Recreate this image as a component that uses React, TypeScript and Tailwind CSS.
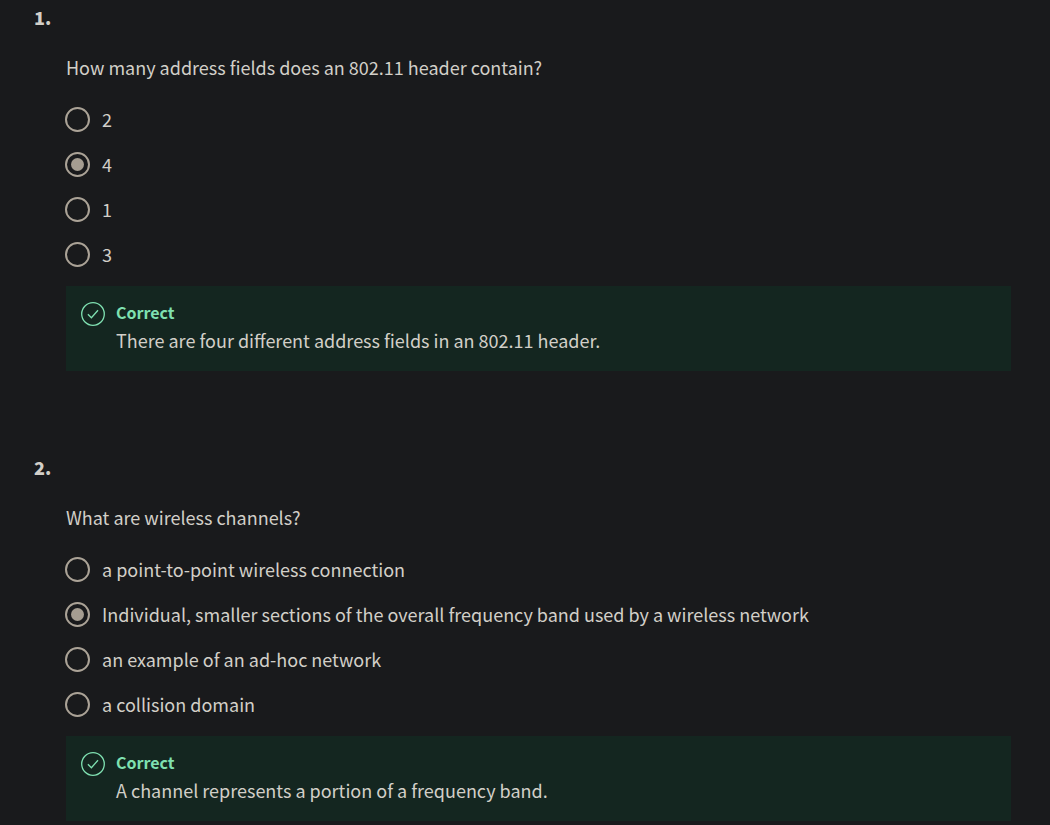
import { useState } from "react";

type Question = {
  id: number;
  prompt: string;
  options: string[];
  answer: number;
  feedback: string;
};

const questions: Question[] = [
  {
    id: 1,
    prompt: "How many address fields does an 802.11 header contain?",
    options: ["2", "4", "1", "3"],
    answer: 1,
    feedback: "There are four different address fields in an 802.11 header.",
  },
  {
    id: 2,
    prompt: "What are wireless channels?",
    options: [
      "a point-to-point wireless connection",
      "Individual, smaller sections of the overall frequency band used by a wireless network",
      "an example of an ad-hoc network",
      "a collision domain",
    ],
    answer: 1,
    feedback: "A channel represents a portion of a frequency band.",
  },
];

function CheckCircle() {
  return (
    <svg viewBox="0 0 24 24" className="mt-1 h-6 w-6 shrink-0" fill="none" stroke="#7fe0b1" aria-hidden="true">
      <circle cx="12" cy="12" r="11.3" strokeWidth="1.3" />
      <path d="M6.9 12.2l3.5 3.5L17 8.2" strokeWidth="1.3" />
    </svg>
  );
}

function QuestionBlock({ question }: { question: Question }) {
  const [selected, setSelected] = useState(question.answer);
  return (
    <section className="pb-[79px] last:pb-1">
      <h2 className="h-[35px] text-lg leading-[34px] font-black">{question.id}.</h2>
      <fieldset className="ml-8 pt-4">
        <legend className="contents">
          <span className="block h-8 leading-8">{question.prompt}</span>
        </legend>
        <div className="flex flex-col pt-[14px]">
          {question.options.map((option, i) => (
            <label key={option} className="flex h-[45px] items-center gap-3">
              <input
                type="radio"
                name={`question-${question.id}`}
                checked={selected === i}
                onChange={() => setSelected(i)}
                className="-ml-px grid size-[25px] shrink-0 appearance-none place-content-center rounded-full border-2 border-[#aba397] before:size-[13px] before:rounded-full checked:before:bg-[#a59d91]"
              />
              <span className="pb-0.5">{option}</span>
            </label>
          ))}
        </div>
      </fieldset>
      <div className="mt-[9px] ml-8 flex gap-[11px] bg-[#142620] pt-3 pr-4 pb-[17px] pl-[15px]">
        <CheckCircle />
        <div>
          <p className="text-base leading-7 font-bold text-[#7fe0b1]">Correct</p>
          <p>{question.feedback}</p>
        </div>
      </div>
    </section>
  );
}

export default function App() {
  return (
    <main className="min-h-screen bg-[#191a1c] pr-[39px] pl-[34px] font-['Noto_Sans_CJK_SC',sans-serif] text-lg leading-7 text-[#d2cfc8]">
      {questions.map((q) => (
        <QuestionBlock key={q.id} question={q} />
      ))}
    </main>
  );
}
